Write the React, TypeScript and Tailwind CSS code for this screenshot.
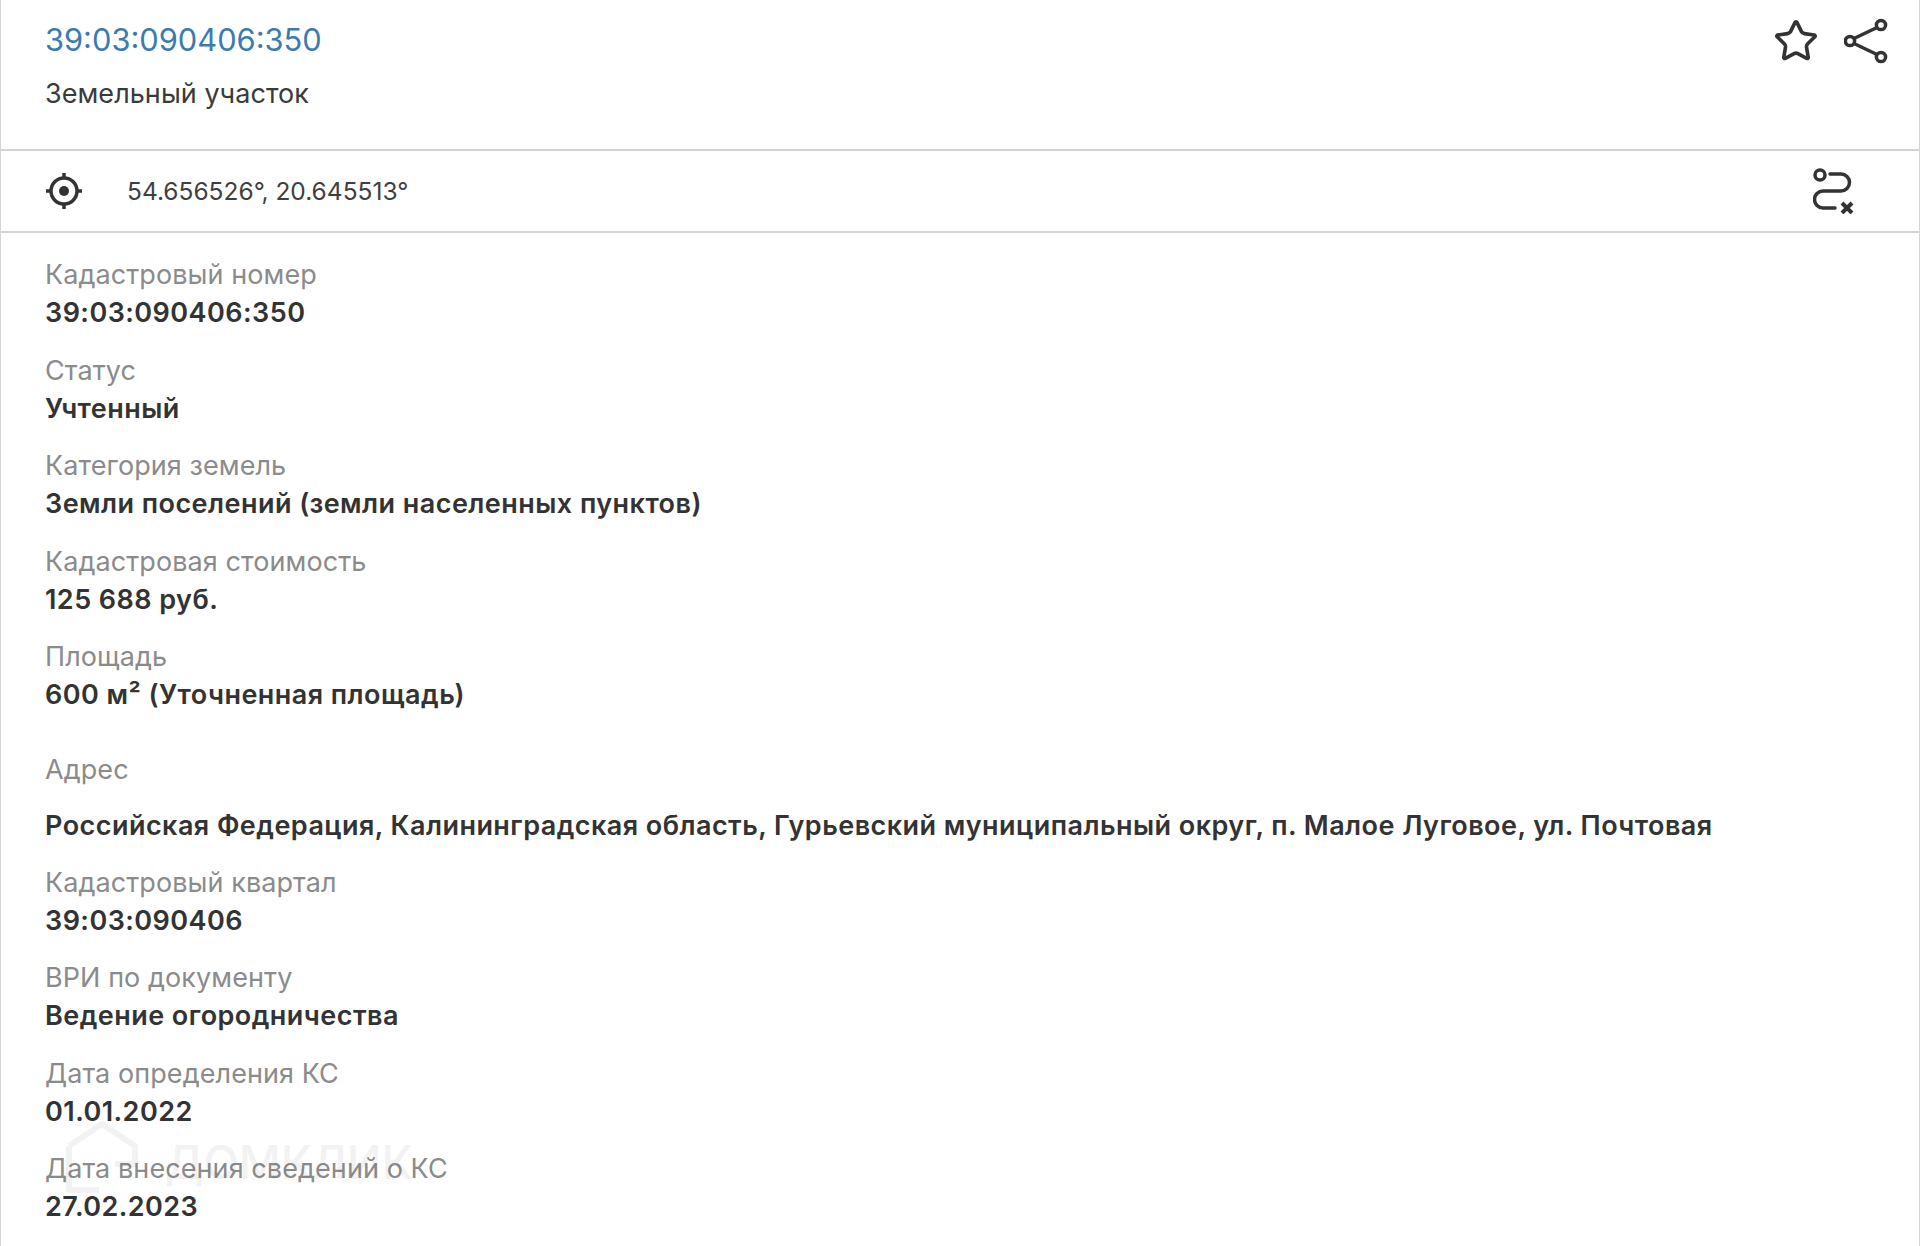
import { Star } from "lucide-react";

const TOP_FIELDS = [
  { label: "Кадастровый номер", value: "39:03:090406:350" },
  { label: "Статус", value: "Учтенный" },
  { label: "Категория земель", value: "Земли поселений (земли населенных пунктов)" },
  { label: "Кадастровая стоимость", value: "125 688 руб." },
  { label: "Площадь", value: "600 м² (Уточненная площадь)" },
];

const BOTTOM_FIELDS = [
  { label: "Кадастровый квартал", value: "39:03:090406" },
  { label: "ВРИ по документу", value: "Ведение огородничества" },
  { label: "Дата определения КС", value: "01.01.2022" },
  { label: "Дата внесения сведений о КС", value: "27.02.2023" },
];

function Field({ label, value }: { label: string; value: string }) {
  return (
    <div className="h-[95.5px]">
      <div className="text-[27px] leading-[38px] tracking-[0.08px] text-[#8b8b8b]">{label}</div>
      <div className="text-[27px] leading-[38px] font-semibold tracking-[0.45px] text-[#333333]">{value}</div>
    </div>
  );
}

function ShareIcon() {
  return (
    <svg width="44" height="46" viewBox="0 0 44 46" fill="none" stroke="#333" strokeWidth="3.5">
      <circle cx="37" cy="7" r="4.6" />
      <circle cx="6" cy="23" r="4.6" />
      <circle cx="37" cy="39" r="4.6" />
      <path d="M10 20.5 33 9.5M10 25.5 33 36.5" />
    </svg>
  );
}

function TargetIcon() {
  return (
    <svg width="38" height="38" viewBox="0 0 38 38" fill="none" stroke="#333" strokeWidth="3.5">
      <circle cx="19" cy="19" r="13" />
      <circle cx="19" cy="19" r="5" fill="#333" stroke="none" />
      <path d="M19 1v5M19 32v5M1 19h5M32 19h5" />
    </svg>
  );
}

function RouteOffIcon() {
  return (
    <svg width="42" height="46" viewBox="0 0 42 46" fill="none" stroke="#333" strokeWidth="3.5" strokeLinecap="round">
      <circle cx="7" cy="7" r="5" />
      <path d="M17 6h11a8.5 8.5 0 0 1 0 17H10a8.5 8.5 0 0 0 0 17h12" />
      <path d="M29 35l10 10M39 35 29 45" strokeWidth="4" strokeLinecap="butt" />
    </svg>
  );
}

export default function App() {
  return (
    <div className="relative h-[1246px] overflow-hidden border-x border-[#d4d4d4] bg-white font-['Inter','Liberation_Sans',sans-serif]">
      <header className="flex h-[149px] items-start justify-between pt-[18px] pr-[31px] pl-[44px]">
        <div>
          <div className="text-[30.8px] leading-[44px] text-[#3b7bb0]">39:03:090406:350</div>
          <div className="mt-[14px] text-[27px] leading-[36px] tracking-[0.05px] text-[#3a3a3a]">Земельный участок</div>
        </div>
        <div className="flex items-center gap-[26px]">
          <Star size={46} strokeWidth={1.9} color="#333" className="-mt-[1px] translate-x-[1px]" />
          <ShareIcon />
        </div>
      </header>

      <div className="flex h-[84px] items-center justify-between border-y-2 border-[#d4d4d4] pr-[64px] pl-[44px]">
        <div className="flex items-center gap-[44px]">
          <TargetIcon />
          <span className="pt-[1px] text-[24.5px] text-[#3f3f3f]">54.656526°, 20.645513°</span>
        </div>
        <RouteOffIcon />
      </div>

      <div className="pt-[23px] pl-[44px]">
        {TOP_FIELDS.map((f) => (
          <Field key={f.label} label={f.label} value={f.value} />
        ))}
        <div className="mt-[17px] h-[113px]">
          <div className="text-[27px] leading-[38px] tracking-[0.08px] text-[#8b8b8b]">Адрес</div>
          <div className="mt-[18px] text-[27px] leading-[38px] font-semibold tracking-[0.45px] text-[#333333]">
            Российская Федерация, Калининградская область, Гурьевский муниципальный округ, п. Малое Луговое, ул. Почтовая
          </div>
        </div>
        {BOTTOM_FIELDS.map((f) => (
          <Field key={f.label} label={f.label} value={f.value} />
        ))}
      </div>

      <div className="pointer-events-none absolute top-[1120px] left-[64px] flex items-center gap-[26px] opacity-[0.07]">
        <svg width="74" height="74" viewBox="0 0 74 74" fill="none" stroke="#555" strokeWidth="6" strokeLinejoin="round">
          <path d="M4 26 37 4l33 22v18H50M4 26v44h30" />
        </svg>
        <span className="pt-[10px] text-[46px] leading-none font-medium text-[#555]">ДОМКЛИК</span>
      </div>
    </div>
  );
}
